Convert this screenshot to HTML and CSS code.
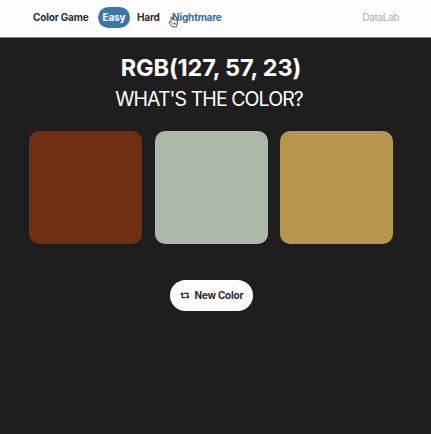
FILE: index.html
```html
<!DOCTYPE html>
<html lang="en">
<head>
<meta charset="utf-8">
<title>Color Game</title>
<link rel="stylesheet" href="styles.css">
</head>
<body>
<nav class="navbar">
  <span class="brand">Color Game</span>
  <a class="mode active">Easy</a>
  <a class="mode">Hard</a>
  <a class="mode hovered">Nightmare
    <svg class="pointer" viewBox="0 0 12 13" aria-hidden="true"><path d="M3.2 7.1V1.8c0-1.4 1.8-1.4 1.8 0v2.5c.2-.8 1.6-.8 1.8.1.5-.7 1.6-.4 1.7.4.7-.5 1.7-.1 1.7.8v2.6c0 1.4-1 2-1 3.6H4.3C3.8 10.1 1.9 8.8 1.2 7.2.8 6.3 2 5.8 3.2 7.1Z"/><path d="M5.4 7.3v2M7 7.3v2M8.6 7.3v2"/></svg>
  </a>
  <span class="author">DataLab</span>
</nav>
<main class="game">
  <h1 class="code">RGB(127, 57, 23)</h1>
  <h2 class="status">WHAT'S THE COLOR?</h2>
  <div class="squares">
    <div class="square brown"></div>
    <div class="square sage"></div>
    <div class="square gold"></div>
  </div>
  <button class="reset">
    <svg class="retweet" viewBox="0 0 20 14" aria-hidden="true"><path class="line" d="M4.4 4v7.2h7M8.2 2.8h7.4V10"/><path class="head" d="M0 5.2 4.4.6 8.8 5.2ZM11.2 8.8h8.8L15.6 13.4Z"/></svg>
    <span class="reset-label">New Color</span>
  </button>
</main>
</body>
</html>
```

FILE: styles.css
```css
* {
  box-sizing: border-box;
}

body {
  margin: 0;
  min-height: 100vh;
  background: #1e1e1f;
  color: #fff;
  font-family: Inter, "Liberation Sans", sans-serif;
}

.navbar {
  display: flex;
  align-items: center;
  height: 38px;
  padding: 0 32px 2px 33px;
  border-bottom: 1px solid #858585;
  background: #fdfdfd;
  color: #2b2b2b;
  font-size: 10px;
  font-weight: 700;
  letter-spacing: -0.18px;
  white-space: nowrap;
}

.brand {
  width: 64.5px;
  line-height: 21px;
}

.mode {
  position: relative;
  width: 35px;
  padding-left: 5px;
  line-height: 21px;
}

.mode.active {
  width: 32px;
  margin-right: 2.5px;
  border-radius: 11px;
  background: #3c74ad;
  color: #fff;
}

.mode.hovered {
  width: 60px;
  color: #2f6dac;
}

.pointer {
  position: absolute;
  left: 1px;
  top: 9px;
  width: 11px;
  height: 12px;
  fill: #fff;
  stroke: #333;
  stroke-width: 0.9;
}

.author {
  margin-left: auto;
  color: #adadad;
  font-weight: 400;
  letter-spacing: -0.35px;
  line-height: 21px;
}

.game {
  display: flex;
  flex-direction: column;
  align-items: center;
  padding: 15px 9px 0 0;
}

.code,
.status {
  margin: 0;
  white-space: nowrap;
}

.code {
  font-size: 23.5px;
  line-height: 30px;
  font-weight: 700;
  letter-spacing: -0.17px;
}

.status {
  margin: 1px 4px 0 0;
  font-size: 19.5px;
  line-height: 30px;
  font-weight: 400;
  letter-spacing: -0.92px;
}

.squares {
  display: flex;
  gap: 12.3px;
  margin-top: 17.4px;
}

.square {
  width: 113px;
  height: 113px;
  border-radius: 10px;
}

.brown {
  background: #702f14;
}

.sage {
  background: #acb9a9;
}

.gold {
  background: #b6964a;
}

.reset {
  display: flex;
  align-items: center;
  width: 83px;
  height: 31px;
  margin-top: 35.6px;
  padding: 0 0 0 10px;
  border: 0;
  border-radius: 16px;
  background: #fdfdfd;
  color: #2b2b2b;
  font: 700 10px Inter, "Liberation Sans", sans-serif;
  letter-spacing: -0.22px;
  white-space: nowrap;
}

.retweet {
  width: 10px;
  height: 7px;
  margin-right: 5px;
}

.retweet .line {
  fill: none;
  stroke: #2b2b2b;
  stroke-width: 2.6;
}

.retweet .head {
  fill: #2b2b2b;
}
```
